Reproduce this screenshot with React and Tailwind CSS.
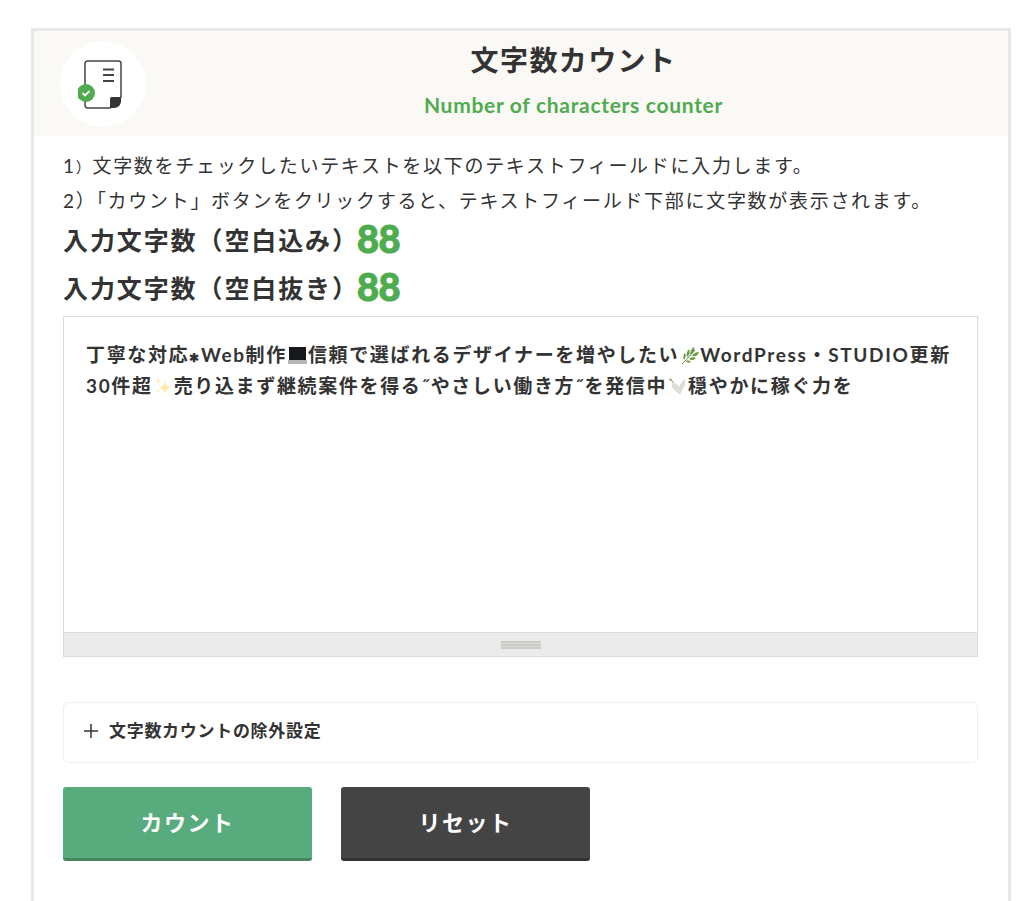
const cjk = "font-['Lato','Noto_Sans_CJK_JP',sans-serif]";

const DocIcon = () => (
  <svg width="50" height="50" viewBox="0 0 50 50" fill="none">
    <path d="M7 30V4.500A2.500 2.500 0 0 1 9.500 2H40.500A2.500 2.500 0 0 1 43 4.500V38L32 49H10A3 3 0 0 1 7 46V40" stroke="#444" strokeWidth="1.500" />
    <path d="M25 10.500H36M25 16H36M25 22H36" stroke="#444" strokeWidth="2.200" />
    <path d="M32 49V40A2 2 0 0 1 34 38H43V42C43 46 40 49 36 49Z" fill="#333" />
    <circle cx="8" cy="34" r="9" fill="#4fab4f" />
    <path d="M4.500 34L7 36.500L11.500 32" stroke="#fff" strokeWidth="1.800" fill="none" />
  </svg>
);

const Laptop = () => (
  <svg className="mx-px inline-block align-[-3px]" width="19" height="19" viewBox="0 0 19 19">
    <rect x="1" y="1" width="17" height="13" fill="#16181c" />
    <rect x="0" y="14" width="19" height="4" fill="#b5b5b5" />
  </svg>
);

const Sparkles = () => (
  <svg className="mx-px inline-block align-[-3px]" width="19" height="19" viewBox="0 0 19 19" fill="#fce9a8">
    <path d="M11 4C11.800 8 13 9.500 17 10.500C13 11.500 11.800 13 11 17C10.200 13 9 11.500 5 10.500C9 9.500 10.200 8 11 4Z" />
    <path d="M4 1C4.400 3 5 3.600 7 4C5 4.400 4.400 5 4 7C3.600 5 3 4.400 1 4C3 3.600 3.600 3 4 1Z" />
    <path d="M4 12C4.300 13.500 4.700 13.800 6 14C4.700 14.300 4.300 14.700 4 16C3.700 14.700 3.300 14.300 2 14C3.300 13.800 3.700 13.500 4 12Z" />
  </svg>
);

const Herb = () => (
  <svg className="mx-px inline-block align-[-3px]" width="19" height="19" viewBox="0 0 19 19" fill="#6a9a45">
    <path d="M2 18C6 14 9 11 15 4" stroke="#5d8a3c" strokeWidth="1" fill="none" />
    <path d="M10 9C10 5 12 2 14 1C15 4 14 7 10 9Z" />
    <path d="M12 10C14 7 16 6 19 6C18 9 16 11 12 10Z" />
    <path d="M7 11C6 8 7 5 9 3C10 6 10 9 7 11Z" />
    <path d="M9 13C11 11 14 11 16 12C14 14 12 15 9 13Z" />
    <path d="M4 14C3 11 3 9 5 7C6 9 6 12 4 14Z" />
    <path d="M6 15C8 14 10 15 11 16C9 17 7 17 6 15Z" />
  </svg>
);

const Dove = () => (
  <svg className="mx-px inline-block align-[-3px]" width="19" height="19" viewBox="0 0 19 19">
    <path d="M5 6C8 6 10 8 11 10C12 7 14 4 17 2C18 6 17 10 14 13L12 18C10 15 6 14 4 10C4 8 4 7 5 6Z" fill="#dcdcd8" />
    <path d="M1 2C3 2 5 4 5 6" stroke="#7fa05c" strokeWidth="1" fill="none" />
    <circle cx="3" cy="3" r="1" fill="#7fa05c" />
  </svg>
);

const App = () => {
  return (
    <div className={`min-h-[901px] overflow-hidden bg-white pt-[28px] pl-[31px] text-[#333] ${cjk}`}>
      <div className="h-[900px] w-[980px] border-3 border-[#e8e8e8]">
        {/* ヘッダー */}
        <div className="relative flex h-[105px] flex-col items-center bg-[#faf9f5] pl-[105px]">
          <div className="absolute top-[10px] left-[26px] flex h-[86px] w-[86px] items-center justify-center rounded-full bg-white">
            <DocIcon />
          </div>
          <h1 className="mt-[12px] text-[28px] leading-[34px] font-bold tracking-[1.4px] text-[#333]">文字数カウント</h1>
          <p className="mt-[15px] text-[21px] leading-[26px] font-bold tracking-[0.7px] text-[#4fab4f]">Number of characters counter</p>
        </div>

        <div className="pr-[30px] pl-[29px]">
          <p className="mt-[15px] text-[19px] leading-[30px] tracking-[1.7px]">1<span className="text-[15px] leading-none">）</span>文字数をチェックしたいテキストを以下のテキストフィールドに入力します。</p>
          <p className="mt-[5px] text-[19px] leading-[30px] tracking-[1.7px]">2）「カウント」ボタンをクリックすると、テキストフィールド下部に文字数が表示されます。</p>

          <div className="flex h-[48px] items-center pt-[2px] text-[25px] font-bold tracking-[1.9px]">
            入力文字数（空白込み）<span className="-mt-[6px] -ml-[2px] text-[38px] leading-[48px] font-black tracking-[-0.5px] text-[#4fab4f] [-webkit-text-stroke:1px_#4fab4f]">88</span>
          </div>
          <div className="flex h-[48px] items-center pt-[2px] text-[25px] font-bold tracking-[1.9px]">
            入力文字数（空白抜き）<span className="-mt-[6px] -ml-[2px] text-[38px] leading-[48px] font-black tracking-[-0.5px] text-[#4fab4f] [-webkit-text-stroke:1px_#4fab4f]">88</span>
          </div>

          {/* テキストフィールド */}
          <div className="mt-[4px] flex h-[341px] flex-col border border-[#dcdcdc]">
            <div className="flex-1 px-[22px] pt-[22px] text-[19px] leading-[31px] font-bold tracking-[1.65px]">
              丁寧な対応<span className="text-[12px] leading-none">✱</span>Web制作<Laptop />信頼で選ばれるデザイナーを増やしたい<Herb />WordPress・STUDIO更新
              <br />
              30件超<Sparkles />売り込まず継続案件を得る˝やさしい働き方˝を発信中<Dove />穏やかに稼ぐ力を
            </div>
            <div className="flex h-[24px] items-center justify-center border-t border-[#dcdcdc] bg-[#ebebeb]">
              <div className="flex w-[40px] flex-col gap-px bg-[#dcdcda]">
                <div className="h-[2px] bg-[#cbcbc7]" />
                <div className="h-[2px] bg-[#cbcbc7]" />
                <div className="h-[2px] bg-[#cbcbc7]" />
              </div>
            </div>
          </div>

          {/* 除外設定 */}
          <div className="mt-[45px] flex h-[61px] items-center rounded-[6px] border border-[#eeeeee] pb-[3px] pl-[19px]">
            <svg width="16" height="16" viewBox="0 0 16 16" stroke="#333" strokeWidth="1.500">
              <path d="M8 1V15M1 8H15" />
            </svg>
            <span className="ml-[10px] text-[17px] font-bold tracking-[0.7px]">文字数カウントの除外設定</span>
          </div>

          <div className="mt-[24px] flex gap-[29px]">
            <button className="h-[74px] w-[249px] rounded-[3px] border-b-3 border-[#44875f] bg-[#57ab7c] text-[22px] font-bold tracking-[1.5px] text-white">カウント</button>
            <button className="h-[74px] w-[249px] rounded-[3px] border-b-3 border-[#333333] bg-[#444444] text-[22px] font-bold tracking-[1.5px] text-white">リセット</button>
          </div>
        </div>
      </div>
    </div>
  );
};

export default App;
